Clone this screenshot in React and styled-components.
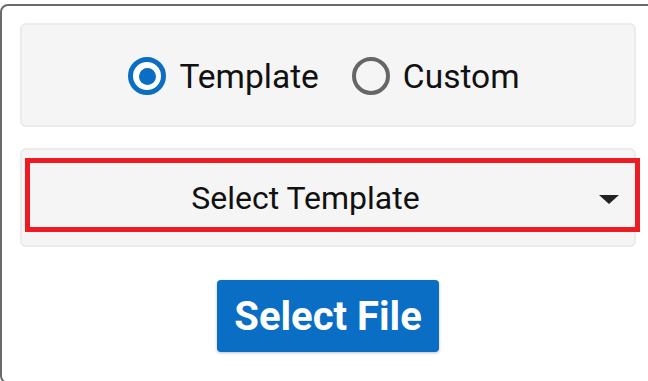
import React, { useState } from 'react';
import styled, { createGlobalStyle } from 'styled-components';

const GlobalStyle = createGlobalStyle`
  html, body {
    margin: 0;
    padding: 0;
    background: #ffffff;
    overflow: hidden;
    font-family: Roboto, "Liberation Sans", Arial, sans-serif;
  }
  body {
    padding-top: 4px;
  }
`;

const Frame = styled.div`
  box-sizing: border-box;
  width: 656px;
  height: 380px;
  border: 2px solid #6b6b6b;
  border-radius: 8px;
  padding: 17px 18px 0 18px;
  display: flex;
  flex-direction: column;
`;

const Panel = styled.div`
  box-sizing: border-box;
  width: 616px;
  height: ${(p) => p.height}px;
  background: #f5f5f5;
  border: 2px solid #ebebeb;
  border-radius: 6px;
`;

const RadioRow = styled.div`
  height: 100%;
  display: flex;
  align-items: center;
  justify-content: center;
  gap: 33px;
  padding: 2px 8px 0 0;
  box-sizing: border-box;
`;

const RadioLabel = styled.label`
  display: flex;
  align-items: center;
  gap: 13px;
  font-size: 33.5px;
  color: #111;
  cursor: pointer;
`;

const Ring = styled.span`
  box-sizing: border-box;
  width: 38px;
  height: 38px;
  border-radius: 50%;
  border: ${(p) => (p.checked ? '5px solid #0a6ec4' : '4px solid #666666')};
  background: ${(p) => (p.checked ? '#ffffff' : 'transparent')};
  display: flex;
  align-items: center;
  justify-content: center;
`;

const Dot = styled.span`
  width: 17px;
  height: 17px;
  border-radius: 50%;
  background: #0a6ec4;
`;

const SelectBox = styled.div`
  box-sizing: border-box;
  width: 615px;
  height: 74px;
  margin: 8px 0 0 3px;
  border: 5px solid #ed1c24;
  background: #f5f5f5;
  display: flex;
  align-items: center;
  position: relative;
`;

const SelectText = styled.span`
  flex: 1;
  text-align: center;
  font-size: 32px;
  color: #111;
  padding-right: 54px;
  padding-top: 6px;
`;

const Caret = styled.span`
  position: absolute;
  right: 16px;
  top: 32px;
  width: 0;
  height: 0;
  border-left: 10px solid transparent;
  border-right: 10px solid transparent;
  border-top: 9px solid #222;
`;

const ButtonRow = styled.div`
  display: flex;
  justify-content: center;
  padding-top: 33px;
  width: 616px;
`;

const FileButton = styled.button`
  height: 72px;
  padding: 0 17px;
  border: none;
  border-radius: 4px;
  background: #0a6ec4;
  color: #fff;
  font-family: Roboto, "Liberation Sans", Arial, sans-serif;
  font-weight: 700;
  font-size: 40px;
  box-shadow: 0 1px 3px rgba(0, 0, 0, 0.25);
  cursor: pointer;
`;

function Radio(props) {
  return <RadioLabel onClick={props.onClick}>
    <Ring checked={props.checked}>{props.checked && <Dot />}</Ring>
    {props.label}
  </RadioLabel>;
}

export default function App() {
  const [mode, setMode] = useState('template');

  return <>
    <GlobalStyle />
    <Frame>
      <Panel height={104}>
        <RadioRow>
          <Radio label="Template" checked={mode === 'template'} onClick={() => setMode('template')} />
          <Radio label="Custom" checked={mode === 'custom'} onClick={() => setMode('custom')} />
        </RadioRow>
      </Panel>
      <Panel height={99} style={{ marginTop: 21 }}>
        <SelectBox>
          <SelectText>Select Template</SelectText>
          <Caret />
        </SelectBox>
      </Panel>
      <ButtonRow>
        <FileButton>Select File</FileButton>
      </ButtonRow>
    </Frame>
  </>;
}
